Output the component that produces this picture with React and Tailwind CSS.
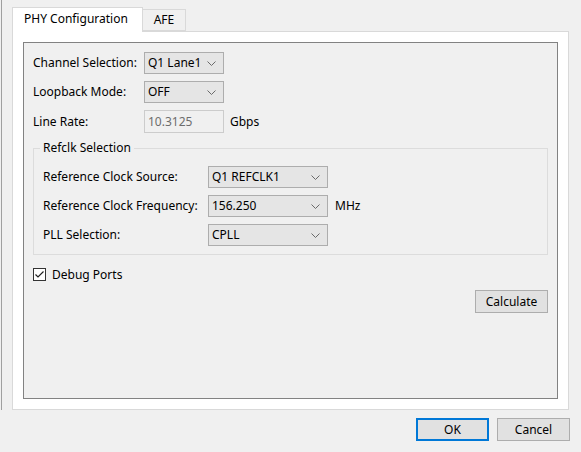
import React from 'react';

// little dropdown caret used by every combo box
function Caret() {
  return (
    <svg width="9" height="5" viewBox="0 0 9 5" className="shrink-0">
      <path d="M0.5 0.5 L4.5 4.5 L8.5 0.5" fill="none" stroke="#6a6a6a" strokeWidth="1" />
    </svg>
  );
}

function Combo({ value, width = 'w-[80px]' }) {
  return (
    <div className={`${width} h-[22px] flex items-center justify-between pl-[3px] pr-[7px] bg-[#e5e5e5] border border-[#adadad]`}>
      <span>{value}</span>
      <Caret />
    </div>
  );
}

function Button({ children, focused }) {
  return (
    <button
      className={`w-[73px] h-[23px] flex items-center justify-center bg-[#e1e1e1] ${
        focused ? 'border-2 border-[#0078d7]' : 'border border-[#adadad]'
      }`}
    >
      {children}
    </button>
  );
}

export default function App() {
  return (
    <div
      className="w-[581px] h-[452px] bg-[#f0f0f0] text-[12px] text-black flex flex-col overflow-hidden"
      style={{ fontFamily: '"Noto Sans", "Liberation Sans", sans-serif' }}
    >
      <div className="h-[410px] flex">
        <div className="ml-px w-px bg-[#a0a0a0]" />
        <div className="ml-[10px] w-[557px] pt-[7px] flex flex-col">
          {/* tab strip */}
          <div className="flex items-end h-[25px] relative z-10 -mb-px">
            <div className="w-[131px] h-[25px] bg-white border border-b-0 border-[#d9d9d9] pl-[11px] pt-[2px]">
              PHY Configuration
            </div>
            <div className="w-[43px] h-[22px] bg-[#f0f0f0] border border-l-0 border-[#d9d9d9] flex items-center justify-center mb-px">
              AFE
            </div>
          </div>

          {/* tab page */}
          <div className="flex-1 bg-white border border-[#d9d9d9] p-[10px]">
            <div className="h-full bg-[#f0f0f0] border border-[#828282] pt-[9px] px-[9px] flex flex-col">
              <div className="flex items-center h-[22px]">
                <span className="w-[111px]">Channel Selection:</span>
                <Combo value="Q1 Lane1" />
              </div>
              <div className="flex items-center h-[22px] mt-[7px]">
                <span className="w-[111px]">Loopback Mode:</span>
                <Combo value="OFF" />
              </div>
              <div className="flex items-center h-[23px] mt-[7px]">
                <span className="w-[111px]">Line Rate:</span>
                <div className="w-[80px] h-[23px] flex items-center pl-[3px] border border-[#cccccc] text-[#6d6d6d]">
                  10.3125
                </div>
                <span className="ml-[6px]">Gbps</span>
              </div>

              {/* refclk group */}
              <div className="relative mt-[15px] border border-[#dcdcdc] pt-[17px] pb-[8px] pl-[9px] flex flex-col gap-[7px]">
                <span className="absolute -top-[10px] left-[6px] px-[3px] bg-[#f0f0f0]">Refclk Selection</span>
                <div className="flex items-center h-[22px]">
                  <span className="w-[165px]">Reference Clock Source:</span>
                  <Combo value="Q1 REFCLK1" width="w-[120px]" />
                </div>
                <div className="flex items-center h-[22px]">
                  <span className="w-[165px]">Reference Clock Frequency:</span>
                  <Combo value="156.250" width="w-[120px]" />
                  <span className="ml-[7px]">MHz</span>
                </div>
                <div className="flex items-center h-[22px]">
                  <span className="w-[165px]">PLL Selection:</span>
                  <Combo value="CPLL" width="w-[120px]" />
                </div>
              </div>

              <label className="flex items-center mt-[12px] h-[15px]">
                <span className="w-[13px] h-[13px] border border-[#333333] bg-white flex items-center justify-center">
                  <svg width="11" height="11" viewBox="0 0 11 11">
                    <path d="M1.5 5.5 L4 8 L9.5 2.5" fill="none" stroke="#222" strokeWidth="1.2" />
                  </svg>
                </span>
                <span className="ml-[6px]">Debug Ports</span>
              </label>

              <div className="flex justify-end mt-[8px]">
                <Button>Calculate</Button>
              </div>
            </div>
          </div>
        </div>
      </div>

      {/* dialog buttons */}
      <div className="flex justify-end gap-[8px] pt-[8px] pr-[11px]">
        <Button focused>OK</Button>
        <Button>Cancel</Button>
      </div>
    </div>
  );
}
